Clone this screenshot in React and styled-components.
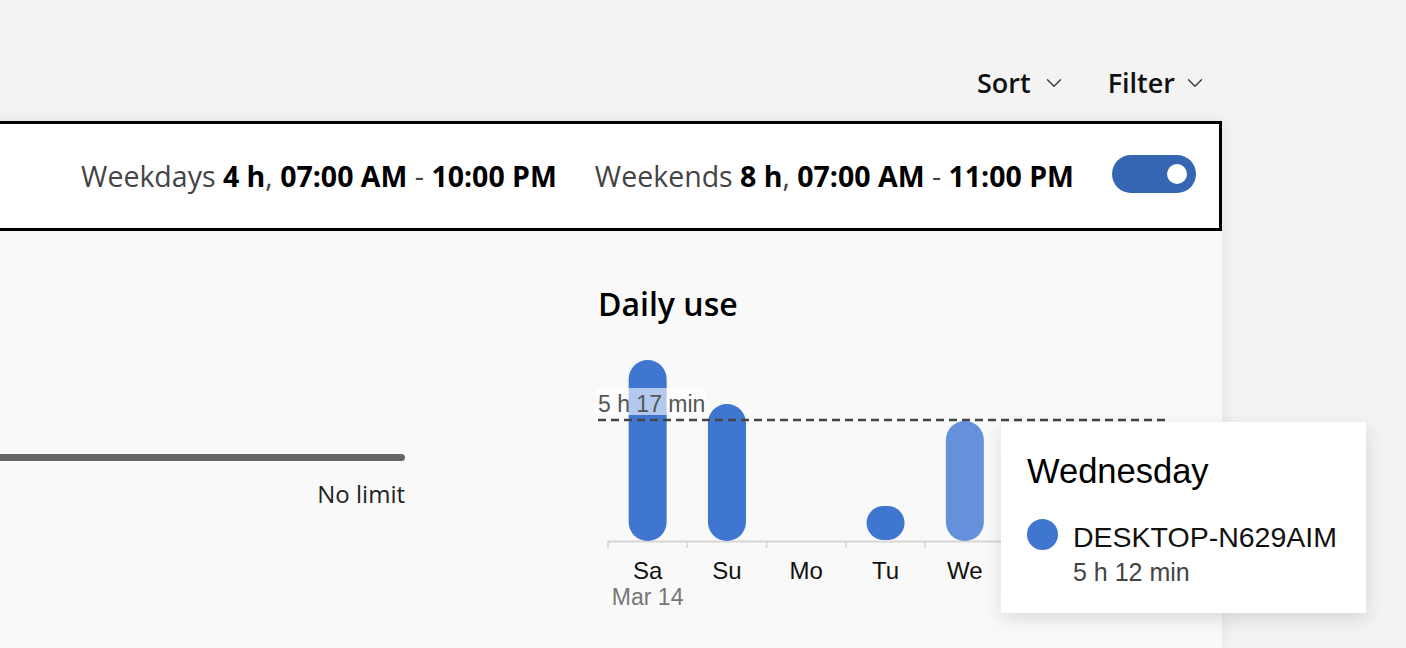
import React from "react";
import styled, { createGlobalStyle } from "styled-components";
import { ChevronDown } from "lucide-react";

const GlobalStyle = createGlobalStyle`
  html, body {
    margin: 0;
    padding: 0;
    background: #f3f3f3;
    overflow: hidden;
  }
  body {
    font-family: "Open Sans", "Noto Sans", sans-serif;
    color: #111;
  }
`;

const Page = styled.div`
  width: 1222px;
  height: 648px;
  display: flex;
  flex-direction: column;
`;

const Toolbar = styled.div`
  display: flex;
  justify-content: flex-end;
  align-items: center;
  gap: 41px;
  height: 121px;
  padding-right: 14px;
  box-sizing: border-box;
  padding-top: 44px;
`;

const MenuButton = styled.button`
  display: flex;
  align-items: center;
  gap: ${(props) => props.$gap || 7}px;
  border: none;
  background: transparent;
  padding: 0;
  font-family: "Open Sans", sans-serif;
  font-size: 27px;
  font-weight: 600;
  color: #111;
  cursor: pointer;
  svg {
    color: #333;
  }
`;

const Card = styled.div`
  margin-left: -240px;
  flex: 1;
  display: flex;
  flex-direction: column;
  box-shadow: 0 0 14px rgba(0, 0, 0, 0.08);
`;

const ScheduleBar = styled.div`
  height: 110px;
  box-sizing: border-box;
  border: 3px solid #000;
  background: #fff;
  display: flex;
  align-items: center;
  justify-content: flex-end;
  gap: 38px;
  padding-right: 23px;
`;

const Schedule = styled.div`
  font-size: 28.5px;
  color: #444;
  white-space: nowrap;
  b {
    color: #000;
    font-weight: 700;
  }
`;

const Switch = styled.div`
  width: 84px;
  height: 38px;
  border-radius: 19px;
  background: #3466b4;
  display: flex;
  align-items: center;
  justify-content: flex-end;
  padding-right: 9px;
  box-sizing: border-box;
  margin-bottom: 5px;
`;

const Knob = styled.span`
  width: 20px;
  height: 20px;
  border-radius: 50%;
  background: #fff;
`;

const Body = styled.div`
  flex: 1;
  background: #f9f9f9;
  display: grid;
  grid-template-columns: 1fr 570px;
  column-gap: 193px;
  padding-right: 54px;
`;

const LimitColumn = styled.div`
  display: flex;
  flex-direction: column;
  align-items: flex-end;
  padding-top: 223px;
`;

const LimitTrack = styled.div`
  width: 100%;
  height: 7px;
  border-radius: 4px;
  background: #666;
`;

const LimitLabel = styled.div`
  margin-top: 17px;
  font-size: 24px;
  line-height: 32px;
  color: #222;
`;

const ChartColumn = styled.div`
  display: flex;
  flex-direction: column;
  padding-top: 51px;
`;

const Heading = styled.h2`
  margin: 0;
  font-size: 32px;
  font-weight: 600;
  line-height: 44px;
  color: #000;
`;

const ChartArea = styled.div`
  position: relative;
  margin-top: 24px;
  height: 260px;
`;

const Tooltip = styled.div`
  position: absolute;
  left: 403px;
  top: 72px;
  width: 365px;
  height: 191px;
  box-sizing: border-box;
  background: #fff;
  box-shadow: 0 6px 18px rgba(0, 0, 0, 0.12);
  padding: 29px 26px 0;
  font-family: "Liberation Sans", Arial, sans-serif;
`;

const TooltipTitle = styled.div`
  font-size: 34.5px;
  color: #000;
  line-height: 40px;
`;

const Series = styled.div`
  display: flex;
  gap: 15px;
  margin-top: 29px;
`;

const Dot = styled.span`
  width: 31px;
  height: 31px;
  border-radius: 50%;
  background: #3f76d0;
  flex-shrink: 0;
  margin-top: -1px;
`;

const SeriesName = styled.div`
  font-size: 28.5px;
  line-height: 34px;
  color: #111;
`;

const SeriesValue = styled.div`
  font-size: 25px;
  line-height: 36px;
  color: #444;
`;

// Th and Fr sit under the tooltip, so only the visible labels are drawn
const days = ["Sa", "Su", "Mo", "Tu", "We"];
const bars = [
  { top: 10, bottom: 191, color: "#3f76d0" },
  { top: 54, bottom: 191, color: "#3f76d0" },
  null,
  { top: 156, bottom: 190, color: "#3f76d0" },
  { top: 71, bottom: 191, color: "#6591db" },
];

const step = 79.3;
const x0 = 10;
const chartFont = "Liberation Sans, Arial, sans-serif";

function DailyChart() {
  return (
    <svg width="570" height="260" viewBox="0 0 570 260" style={{ overflow: "visible", display: "block" }}>
      <line x1={x0} y1="191.5" x2={x0 + step * 7} y2="191.5" stroke="#d6d6d6" strokeWidth="2" />
      {Array.from({ length: 8 }).map((_, i) => (
        <line key={i} x1={x0 + step * i} y1="191" x2={x0 + step * i} y2="198" stroke="#d6d6d6" strokeWidth="1.5" />
      ))}
      {bars.map((b, i) => {
        if (!b) return null;
        const cx = x0 + step * i + step / 2;
        const h = b.bottom - b.top;
        return (
          <rect key={i} x={cx - 19} y={b.top} width="38" height={h} rx={Math.min(19, h / 2)} fill={b.color} />
        );
      })}
      <line x1="0" y1="70" x2="570" y2="70" stroke="#444" strokeWidth="2.5" strokeDasharray="8 5" />
      <rect x="-2" y="38" width="110" height="27" fill="rgba(255,255,255,0.6)" />
      <text x="0" y="62" fontFamily={chartFont} fontSize="23" fill="#555">
        5 h 17 min
      </text>
      {days.map((d, i) => (
        <text key={d} x={x0 + step * i + step / 2} y="229" textAnchor="middle" fontFamily={chartFont} fontSize="24" fill="#111">
          {d}
        </text>
      ))}
      <text x={x0 + step / 2} y="255" textAnchor="middle" fontFamily={chartFont} fontSize="23" fill="#777">
        Mar 14
      </text>
    </svg>
  );
}

export default function App() {
  return (
    <>
      <GlobalStyle />
      <Page>
        <Toolbar>
          <MenuButton $gap={10}>
            Sort <ChevronDown size={26} strokeWidth={1.2} />
          </MenuButton>
          <MenuButton>
            Filter <ChevronDown size={26} strokeWidth={1.2} />
          </MenuButton>
        </Toolbar>
        <Card>
          <ScheduleBar>
            <Schedule>
              Weekdays <b>4 h</b>, <b>07:00 AM</b> - <b>10:00 PM</b>
            </Schedule>
            <Schedule>
              Weekends <b>8 h</b>, <b>07:00 AM</b> - <b>11:00 PM</b>
            </Schedule>
            <Switch>
              <Knob />
            </Switch>
          </ScheduleBar>
          <Body>
            <LimitColumn>
              <LimitTrack />
              <LimitLabel>No limit</LimitLabel>
            </LimitColumn>
            <ChartColumn>
              <Heading>Daily use</Heading>
              <ChartArea>
                <DailyChart />
                <Tooltip>
                  <TooltipTitle>Wednesday</TooltipTitle>
                  <Series>
                    <Dot />
                    <div>
                      <SeriesName>DESKTOP-N629AIM</SeriesName>
                      <SeriesValue>5 h 12 min</SeriesValue>
                    </div>
                  </Series>
                </Tooltip>
              </ChartArea>
            </ChartColumn>
          </Body>
        </Card>
      </Page>
    </>
  );
}
